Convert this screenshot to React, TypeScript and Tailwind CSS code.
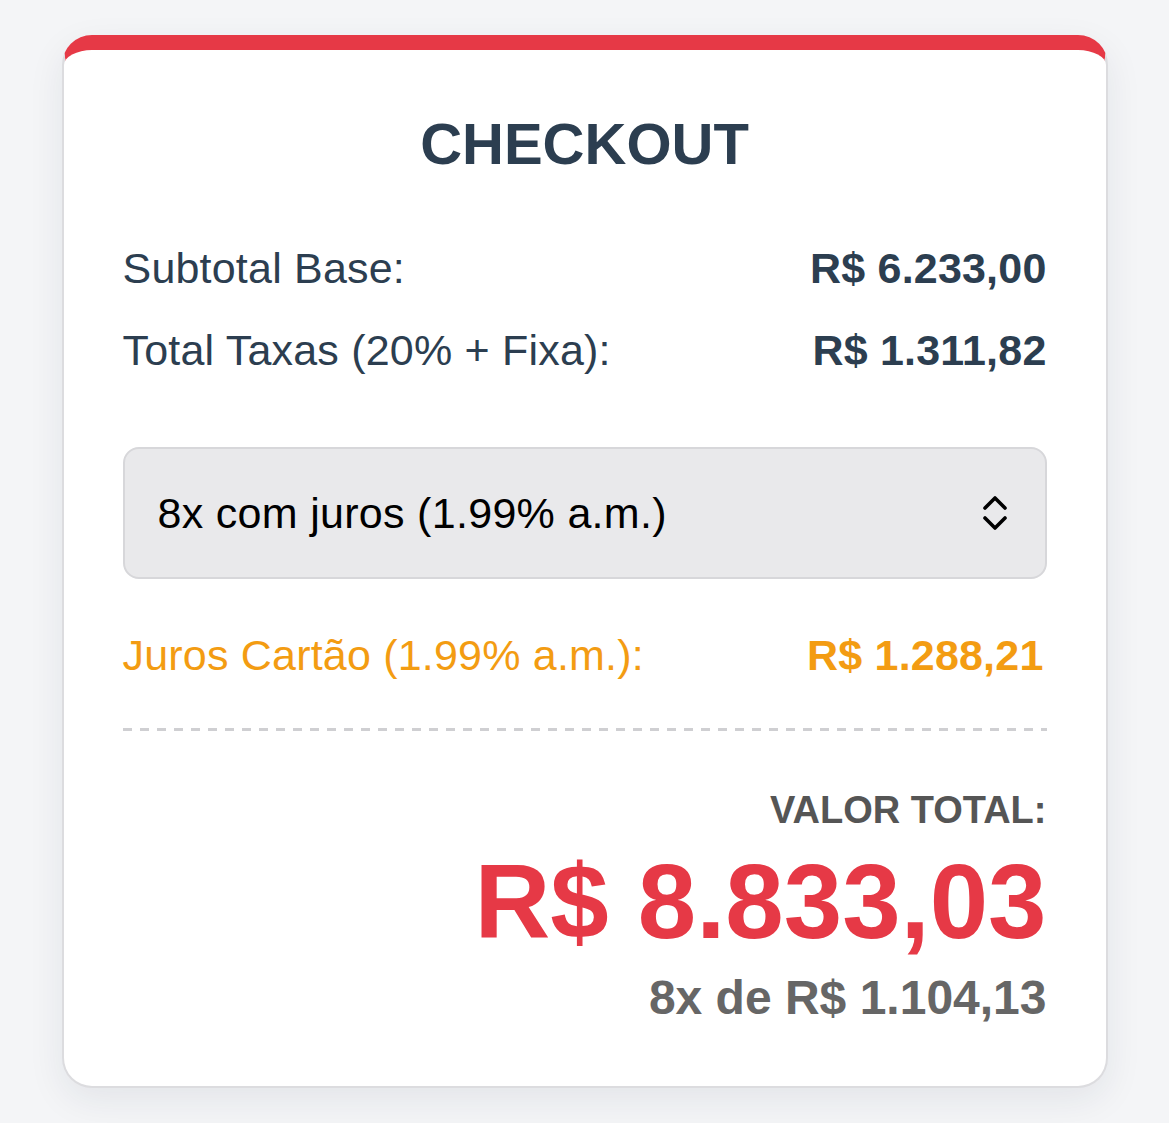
import { useState } from "react";

const font = { fontFamily: '"Liberation Sans", Arial, Helvetica, sans-serif' };

function Row({ label, value, tone = "text-[#2c3e50]" }: { label: string; value: string; tone?: string }) {
  return (
    <div className={`flex items-baseline justify-between text-[43px] leading-none tracking-[0.2px] ${tone}`}>
      <span>{label}</span>
      <span className="font-bold">{value}</span>
    </div>
  );
}

export default function App() {
  const [plan, setPlan] = useState("8");

  return (
    <div className="min-h-screen bg-[#f4f5f7] pt-[35px]" style={font}>
      <div className="mx-auto w-[1046px] rounded-[30px] border-x-2 border-b-2 border-t-[15px] border-x-[#dcdcdf] border-b-[#dcdcdf] border-t-[#e63946] bg-white px-[59px] pb-[64px] pt-[65px] shadow-[0_12px_36px_rgba(30,40,60,0.08)]">
        <h2 className="text-center text-[58px] font-bold leading-none text-[#2c3e50]">CHECKOUT</h2>

        <div className="mt-[74px] flex flex-col gap-[39px]">
          <Row label="Subtotal Base:" value="R$ 6.233,00" />
          <Row label="Total Taxas (20% + Fixa):" value="R$ 1.311,82" />
        </div>

        <div className="relative mt-[75px]">
          <select
            value={plan}
            onChange={(e) => setPlan(e.target.value)}
            className="h-[132px] w-full appearance-none rounded-[16px] border-2 border-[#d7d7da] bg-[#e9e9eb] pl-[33px] text-[43px] tracking-[0.3px] text-black outline-none"
            style={font}
          >
            <option value="1">1x sem juros</option>
            <option value="8">8x com juros (1.99% a.m.)</option>
          </select>
          <svg
            viewBox="0 0 24 36"
            className="pointer-events-none absolute right-[40px] top-[48px] h-[36px] w-[24px]"
            fill="none"
            stroke="black"
            strokeWidth="3.6"
            strokeLinecap="round"
            strokeLinejoin="round"
            aria-hidden
          >
            <path d="M2 13 L12 3 L22 13" />
            <path d="M2 23 L12 33 L22 23" />
          </svg>
        </div>

        <div className="mt-[55px]">
          <Row label="Juros Cartão (1.99% a.m.):" value="R$ 1.288,21" tone="text-[#f39c12] pr-[3px]" />
        </div>

        <div className="mt-[51px] h-[3px] bg-[repeating-linear-gradient(90deg,#cfcfd2_0_9px,transparent_9px_17px)]" />

        <div className="mt-[60px] flex flex-col items-end">
          <div className="text-[38px] font-bold leading-none text-[#555]">VALOR TOTAL:</div>
          <div className="mt-[20px] text-[105px] font-bold leading-none text-[#e63946]">R$ 8.833,03</div>
          <div className="mt-[20px] text-[48px] font-bold leading-none text-[#666]">8x de R$ 1.104,13</div>
        </div>
      </div>
    </div>
  );
}
